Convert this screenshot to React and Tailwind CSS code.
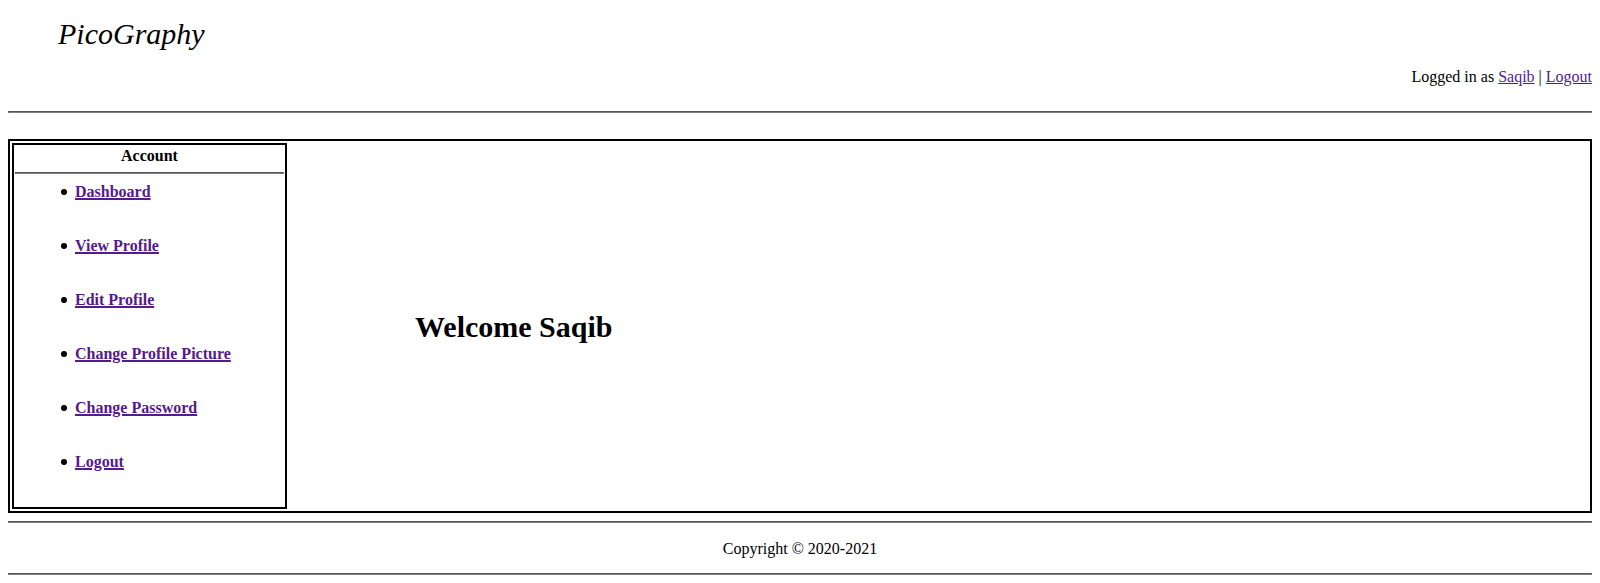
const links = [
  'Dashboard',
  'View Profile',
  'Edit Profile',
  'Change Profile Picture',
  'Change Password',
  'Logout',
];

function Rule() {
  return (
    <hr className="h-0.5 border border-t-[#555555] border-r-[#808080] border-b-[#808080] border-l-[#555555]" />
  );
}

function TextLink({ children, heavy }) {
  return (
    <a
      href="#"
      className={heavy ? 'text-[#551a8b] underline decoration-2' : 'text-[#551a8b] underline'}
    >
      {children}
    </a>
  );
}

export default function App() {
  return (
    <div className="bg-white px-2 pb-2 font-['Liberation_Serif',serif] text-base leading-[18px] text-black">
      <header className="pt-4">
        <p className="pl-[50px] text-3xl leading-9 italic">PicoGraphy</p>
        <nav className="pt-4 pb-[25px] text-right">
          Logged in as <TextLink>Saqib</TextLink> | <TextLink>Logout</TextLink>
        </nav>
      </header>
      <Rule />

      <div className="mt-[26px] mb-2 flex border-2 border-black p-0.5">
        <aside className="w-[275px] shrink-0 border-2 border-black p-px font-bold">
          <h2 className="pt-px pb-[7px] text-center">Account</h2>
          <Rule />
          <ul className="flex flex-col gap-9 pt-[9px] pb-[35px] pl-[46px]">
            {links.map((label) => (
              <li
                key={label}
                className="flex items-center gap-2 before:size-1.5 before:rounded-full before:bg-black"
              >
                <TextLink heavy>{label}</TextLink>
              </li>
            ))}
          </ul>
        </aside>
        <main className="flex grow items-center pt-0.5 pl-32">
          <h1 className="text-3xl leading-9 font-bold">Welcome Saqib</h1>
        </main>
      </div>

      <footer>
        <Rule />
        <p className="pt-[17px] pb-[15px] text-center">Copyright © 2020-2021</p>
        <Rule />
      </footer>
    </div>
  );
}
